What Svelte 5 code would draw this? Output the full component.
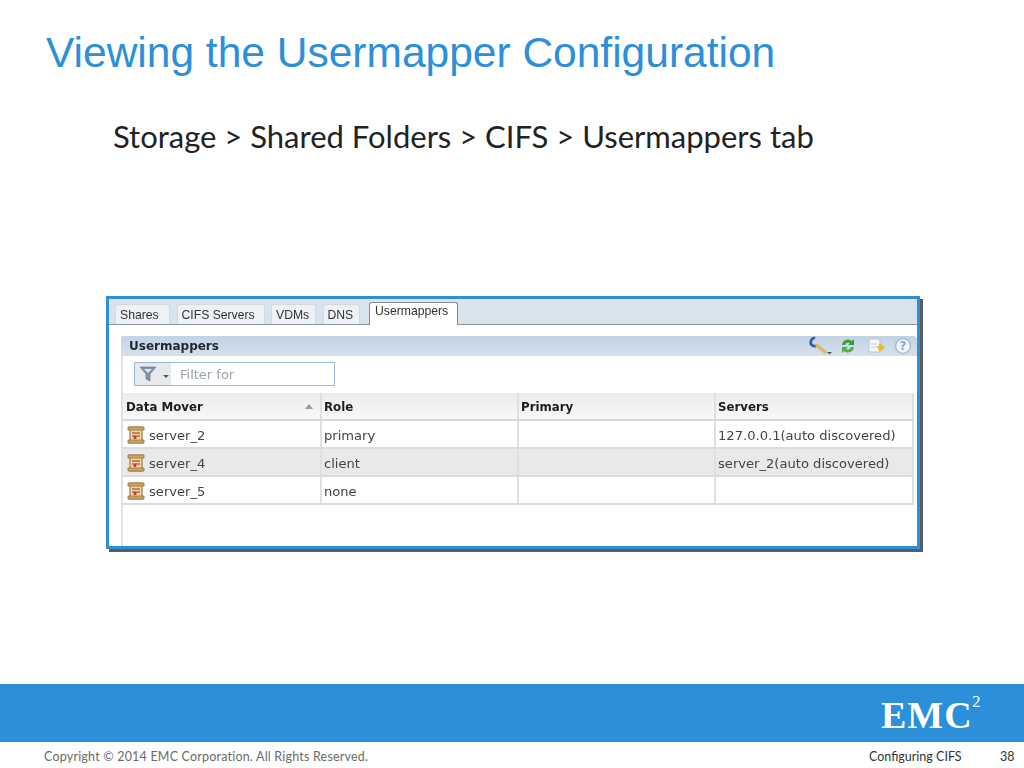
<script>
    const tabs = [
        { label: 'Shares', width: 55 },
        { label: 'CIFS Servers', width: 88 },
        { label: 'VDMs', width: 45 },
        { label: 'DNS', width: 37 },
        { label: 'Usermappers', width: 89, active: true }
    ];

    const rows = [
        { mover: 'server_2', role: 'primary', primary: '', servers: '127.0.0.1(auto discovered)' },
        { mover: 'server_4', role: 'client', primary: '', servers: 'server_2(auto discovered)' },
        { mover: 'server_5', role: 'none', primary: '', servers: '' }
    ];
</script>

<div class="slide">
    <h1>Viewing the Usermapper Configuration</h1>
    <p class="crumb">Storage &gt; Shared Folders &gt; CIFS &gt; Usermappers tab</p>

    <div class="shot">
        <div class="tabstrip">
            {#each tabs as tab}
                <div class="tab" class:active={tab.active} style="width: {tab.width}px">{tab.label}</div>
            {/each}
        </div>

        <div class="panel">
            <div class="panel-title">
                <span>Usermappers</span>
                <div class="tools">
                    <svg width="25" height="20" viewBox="0 0 25 20">
                        <path d="M6 2 a4.500 4.500 0 0 0 -3 6 a4.500 4.500 0 0 0 6 1.500" fill="none" stroke="#2f5f9e" stroke-width="2.800" stroke-linecap="round" />
                        <path d="M9 9.500 L17 16" stroke="#dcb962" stroke-width="3.400" stroke-linecap="round" />
                        <path d="M19 16 h5 l-2.500 2.500z" fill="#44546a" />
                    </svg>
                    <svg class="refresh" width="16" height="18" viewBox="0 0 16 18">
                        <path d="M2 8 a6 6 0 0 1 10 -4 l2 -2 v6 h-6 l2 -2 a3.500 3.500 0 0 0 -5 2z" fill="#3d9a3a" />
                        <path d="M14 10 a6 6 0 0 1 -10 4 l-2 2 v-6 h6 l-2 2 a3.500 3.500 0 0 0 5 -2z" fill="#55b04a" />
                    </svg>
                    <svg width="20" height="18" viewBox="0 0 20 18">
                        <path d="M2 2 h9 l2 2 v11 h-11z" fill="#f3f6fa" stroke="#b9c6d8" />
                        <path d="M4 7 h6 M4 10 h6" stroke="#c3cfdd" />
                        <path d="M13 6 l5 4.500 -5 4.500 -3 -4.500z" fill="#f2b632" />
                    </svg>
                    <svg width="18" height="18" viewBox="0 0 18 18">
                        <circle cx="9" cy="9" r="7.500" fill="#eef3f9" stroke="#a9bcd6" stroke-width="1.500" />
                        <text x="9" y="13" text-anchor="middle" class="help">?</text>
                    </svg>
                </div>
            </div>

            <div class="filter-row">
                <div class="filter">
                    <div class="filter-btn">
                        <svg width="20" height="18" viewBox="0 0 20 18">
                            <path d="M1 2 h16 l-6 7 v7 l-4 -2 v-5z" fill="#7f93ab" stroke="#5f738c" stroke-width=".6" />
                            <path d="M5 4 h8 l-4 4z" fill="#dfe6ee" />
                        </svg>
                        <span class="caret"></span>
                    </div>
                    <span class="filter-text">Filter for</span>
                </div>
            </div>

            <div class="grid">
                <div class="head">
                    <div class="cell mover">Data Mover<span class="sort"></span></div>
                    <div class="cell">Role</div>
                    <div class="cell">Primary</div>
                    <div class="cell">Servers</div>
                </div>
                {#each rows as row, i}
                    <div class="row" class:alt={i === 1}>
                        <div class="cell mover">
                            <svg class="scroll" width="18" height="20" viewBox="0 0 18 20">
                                <path d="M3 2 h12 v16 h-12z" fill="#ecd6a8" stroke="#a67c3d" stroke-width="1.200" />
                                <path d="M1 2 h16 v3 h-16z M1 15 h16 v3 h-16z" fill="#cfa868" stroke="#96703a" stroke-width=".8" />
                                <path d="M5 8 h8 M5 11 h8" stroke="#c0654a" stroke-width="1.400" />
                                <circle cx="8" cy="12.500" r="1.500" fill="#c9302c" />
                            </svg>
                            {row.mover}
                        </div>
                        <div class="cell">{row.role}</div>
                        <div class="cell">{row.primary}</div>
                        <div class="cell">{row.servers}</div>
                    </div>
                {/each}
            </div>
        </div>
    </div>

    <div class="bar">
        <div class="logo">EMC<sup>2</sup></div>
    </div>
    <div class="foot">
        <span class="copy">Copyright © 2014 EMC Corporation. All Rights Reserved.</span>
        <span class="section">Configuring CIFS</span>
        <span class="page">38</span>
    </div>
</div>

<style>
    :global(body) {
        margin: 0;
        background: #fff;
    }

    .slide {
        width: 1024px;
        height: 768px;
        display: flex;
        flex-direction: column;
        overflow: hidden;
    }

    h1 {
        margin: 28px 0 0 46px;
        height: 50px;
        font: 400 42.500px/50px "Liberation Sans", Arial, sans-serif;
        color: #2b90d9;
    }

    .crumb {
        margin: 38px 0 0 113px;
        height: 40px;
        font: 400 31px/40px Lato, "Open Sans", sans-serif;
        color: #222;
    }

    .shot {
        margin: 140px 0 0 106px;
        width: 808px;
        height: 247px;
        border: 3px solid #2f8fd6;
        box-shadow: 3px 3px 0 #555c66;
        background: #fff;
        display: flex;
        flex-direction: column;
        filter: blur(0.4px);
    }

    .tabstrip {
        height: 26px;
        background: #d9e3ee;
        border-bottom: 1px solid #8f959c;
        display: flex;
        align-items: flex-end;
        gap: 6.500px;
        padding-left: 6px;
        box-sizing: border-box;
        flex: none;
    }

    .tab {
        height: 20px;
        box-sizing: border-box;
        padding-left: 4px;
        background: #eef2f6;
        border: 1px solid #d2d9e1;
        border-bottom: none;
        border-radius: 3px 3px 0 0;
        font: 12.200px/20px "Liberation Sans", Arial, sans-serif;
        color: #333;
    }

    .tab.active {
        height: 23px;
        margin-bottom: -1px;
        margin-left: 3px;
        padding-left: 5px;
        background: #fff;
        border-color: #7f8c99;
        line-height: 17px;
    }

    .panel {
        margin: 11px 0 0 12px;
        width: 796px;
        flex: 1;
        display: flex;
        flex-direction: column;
        border-left: 2px solid #dfe3e7;
        box-sizing: border-box;
    }

    .panel-title {
        height: 20px;
        flex: none;
        margin-left: -2px;
        padding: 0 0 0 8px;
        display: flex;
        align-items: center;
        justify-content: space-between;
        background: linear-gradient(#c2d3e5, #d5e0ec);
        border-radius: 4px 4px 0 0;
        font: 700 12px "DejaVu Sans", Verdana, sans-serif;
        color: #1c2733;
    }

    .tools {
        display: flex;
        align-items: center;
        gap: 7px;
        margin-right: 5px;
    }

    .refresh {
        margin-right: 4px;
    }

    .help {
        font: 700 12px "DejaVu Sans", sans-serif;
        fill: #8fa7c6;
    }

    .filter-row {
        height: 37px;
        flex: none;
        padding: 6px 0 0 11px;
        box-sizing: border-box;
    }

    .filter {
        width: 201px;
        height: 24px;
        box-sizing: border-box;
        border: 1px solid #9cb9d8;
        display: flex;
        align-items: center;
    }

    .filter-btn {
        width: 36px;
        height: 100%;
        background: #e6eaee;
        display: flex;
        align-items: center;
        padding-left: 4px;
        box-sizing: border-box;
        position: relative;
    }

    .caret {
        position: absolute;
        right: 2px;
        bottom: 4px;
        border: 3px solid transparent;
        border-top-color: #4a5a6c;
    }

    .filter-text {
        margin-left: 9px;
        font: 13px "DejaVu Sans", Verdana, sans-serif;
        color: #9aa3ad;
    }

    .grid {
        width: 791px;
        font: 13.100px "DejaVu Sans", Verdana, sans-serif;
        color: #444;
    }

    .head, .row {
        display: grid;
        grid-template-columns: 199px 197px 197px 198px;
    }

    .head {
        height: 28px;
        background: linear-gradient(#ececec, #f8f8f8);
        border-bottom: 2px solid #d8d8d8;
        box-sizing: border-box;
        font-size: 11.800px;
        font-weight: 700;
        color: #1d1d1d;
    }

    .head .cell {
        padding-top: 1px;
    }

    .row {
        height: 28px;
        box-sizing: border-box;
        border-bottom: 2px solid #dcdcdc;
    }

    .row.alt {
        background: #e9e9e9;
    }

    .cell {
        display: flex;
        align-items: center;
        gap: 4px;
        padding-left: 2px;
        border-right: 2px solid #e0e0e0;
        box-sizing: border-box;
        white-space: nowrap;
    }

    .row .cell {
        padding-top: 2px;
    }

    .head .mover {
        padding-left: 3px;
    }

    .sort {
        margin-left: auto;
        margin-right: 7px;
        border: 4px solid transparent;
        border-top: none;
        border-bottom: 5px solid #9a9a9a;
    }

    .scroll {
        margin-left: 2px;
        flex: none;
    }

    .bar {
        margin-top: 135px;
        height: 58px;
        flex: none;
        background: #2b90d9;
        position: relative;
    }

    .logo {
        position: absolute;
        left: 881px;
        top: 9px;
        font: 700 38px/44px "Liberation Serif", "Times New Roman", serif;
        letter-spacing: 1px;
        color: #fff;
    }

    .logo sup {
        position: absolute;
        left: 91px;
        top: 0;
        font-size: 17px;
        line-height: 17px;
        font-weight: 400;
        letter-spacing: 0;
    }

    .foot {
        height: 26px;
        flex: none;
        padding-top: 2px;
        box-sizing: border-box;
        display: flex;
        align-items: center;
        font: 12.500px Lato, "Open Sans", sans-serif;
        color: #6b6b6b;
    }

    .copy {
        margin-left: 44px;
        width: 825px;
        letter-spacing: .2px;
    }

    .section {
        width: 131px;
        color: #333;
    }

    .page {
        color: #333;
    }
</style>
